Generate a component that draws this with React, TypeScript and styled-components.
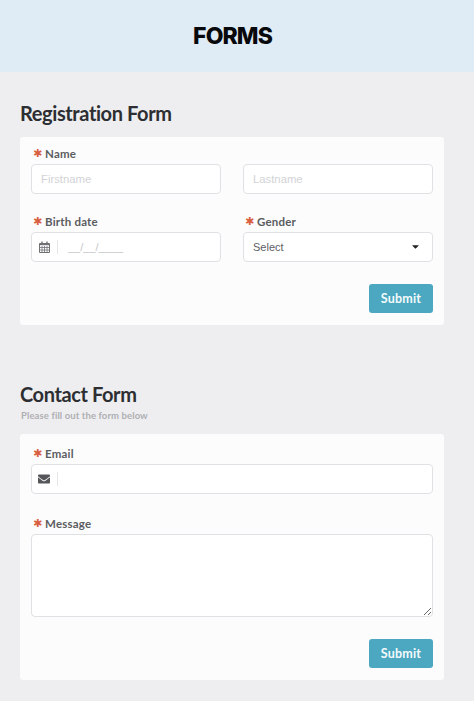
import styled, { createGlobalStyle } from "styled-components";
import { FaCaretDown, FaEnvelope } from "react-icons/fa";

const CalendarIcon = () => (
  <svg width="11" height="12" viewBox="0 0 11 12" fill="none" stroke="#707175" strokeWidth="1">
    <path d="M.5 2.500h10v9H.5z" />
    <path d="M.5 3.500h10" strokeWidth="1.4" />
    <path d="M3 5v6.500M5.500 5v6.500M8 5v6.500M.5 6.500h10M.5 9h10" strokeWidth="0.8" />
    <path d="M3 .5v2M8 .5v2" strokeWidth="1.4" />
  </svg>
);

const App = () => {
  return (
    <>
      <GlobalStyle />
      <Header>
        <Title>FORMS</Title>
      </Header>
      <Main>
        <Section>
          <SectionTitle>Registration Form</SectionTitle>
          <Card>
            <Grid>
              <Field>
                <Label>Name</Label>
                <TextInput placeholder="Firstname" />
              </Field>
              <Field>
                <LabelSpacer />
                <TextInput placeholder="Lastname" />
              </Field>
              <Field>
                <Label>Birth date</Label>
                <InputGroup>
                  <Addon>
                    <CalendarIcon />
                  </Addon>
                  <GroupInput placeholder="__/__/____" />
                </InputGroup>
              </Field>
              <Field>
                <Label>Gender</Label>
                <SelectBox>
                  Select
                  <FaCaretDown size={11} color="#222" />
                </SelectBox>
              </Field>
            </Grid>
            <Actions>
              <SubmitButton type="button">Submit</SubmitButton>
            </Actions>
          </Card>
        </Section>

        <Section $spaced>
          <SectionTitle>Contact Form</SectionTitle>
          <SectionHint>Please fill out the form below</SectionHint>
          <Card $roomy>
            <Stack>
              <Field>
                <Label>Email</Label>
                <InputGroup>
                  <Addon>
                    <FaEnvelope size={12} />
                  </Addon>
                  <GroupInput />
                </InputGroup>
              </Field>
              <Field>
                <Label>Message</Label>
                <MessageInput />
              </Field>
            </Stack>
            <Actions>
              <SubmitButton type="button">Submit</SubmitButton>
            </Actions>
          </Card>
        </Section>
      </Main>
    </>
  );
};

const GlobalStyle = createGlobalStyle`
  html, body {
    margin: 0;
    background: #eeeef0;
  }

  body {
    font-family: "Lato", "Liberation Sans", sans-serif;
    color: #2d2e32;
  }

  * {
    box-sizing: border-box;
  }
`;

const Header = styled.header`
  height: 72px;
  display: flex;
  align-items: center;
  justify-content: center;
  padding-right: 9px;
  background: #dfecf6;
`;

const Title = styled.h1`
  margin: 0;
  font-family: "Inter", sans-serif;
  font-size: 23px;
  font-weight: 800;
  letter-spacing: -0.9px;
  color: #08090c;
`;

const Main = styled.main`
  padding: 29px 30px 21px 20px;
`;

const Section = styled.section<{ $spaced?: boolean }>`
  margin-top: ${({ $spaced }) => ($spaced ? "57px" : "0")};
`;

const SectionTitle = styled.h2`
  margin: 0;
  font-size: 20px;
  line-height: 24px;
  font-weight: 700;
  letter-spacing: -0.4px;
  color: #2d2e32;
`;

const SectionHint = styled.p`
  margin: 4px 0 0 1px;
  font-size: 9.5px;
  line-height: 12px;
  font-weight: 700;
  letter-spacing: 0.1px;
  color: #aeafb3;
`;

const Card = styled.div<{ $roomy?: boolean }>`
  margin-top: 12px;
  padding: ${({ $roomy }) => ($roomy ? "11.5px" : "8.5px")} 11px 12px;
  border-radius: 3px;
  background: #fcfcfd;
`;

const Grid = styled.div`
  display: grid;
  grid-template-columns: 190px 190px;
  column-gap: 22px;
  row-gap: 20px;
`;

const Stack = styled.div`
  display: flex;
  flex-direction: column;
  gap: 22px;
`;

const Field = styled.div`
  display: flex;
  flex-direction: column;
  gap: 3px;
`;

const Label = styled.label`
  height: 15px;
  display: flex;
  align-items: center;
  padding-left: 2px;
  font-size: 11.5px;
  line-height: 15px;
  font-weight: 700;
  letter-spacing: 0.2px;
  color: #5b5c60;

  &::before {
    content: "✱";
    width: 12px;
    flex: none;
    font-family: "DejaVu Sans", sans-serif;
    font-size: 11px;
    line-height: 15px;
    color: #d9603f;
  }
`;

const LabelSpacer = styled.div`
  height: 15px;
`;

const TextInput = styled.input`
  width: 100%;
  height: 30px;
  padding: 0 9px;
  border: 1px solid #e0e1e4;
  border-radius: 4px;
  background: #fff;
  font-family: "Liberation Sans", sans-serif;
  font-size: 11.3px;
  outline: none;

  &::placeholder {
    color: #d2d3d6;
    opacity: 1;
  }
`;

const InputGroup = styled.div`
  height: 30px;
  display: flex;
  align-items: center;
  border: 1px solid #e0e1e4;
  border-radius: 4px;
  background: #fff;
`;

const Addon = styled.span`
  width: 26px;
  height: 14px;
  flex: none;
  display: flex;
  align-items: center;
  justify-content: center;
  padding-right: 1px;
  border-right: 1px solid #e6e6e8;
  color: #55565a;
`;

const GroupInput = styled.input`
  flex: 1;
  min-width: 0;
  height: 100%;
  padding: 0 10px;
  border: 0;
  background: transparent;
  font-family: "Liberation Sans", sans-serif;
  font-size: 11px;
  outline: none;

  &::placeholder {
    color: #c6c7ca;
    opacity: 1;
  }
`;

const SelectBox = styled.div`
  height: 30px;
  display: flex;
  align-items: center;
  justify-content: space-between;
  padding: 0 11px 0 9px;
  border: 1px solid #e0e1e4;
  border-radius: 4px;
  background: #fff;
  font-family: "Liberation Sans", sans-serif;
  font-size: 11px;
  color: #5f6064;
`;

const MessageInput = styled.textarea`
  display: block;
  width: 100%;
  height: 83px;
  padding: 6px 9px;
  border: 1px solid #e0e1e4;
  border-radius: 4px;
  background: #fff;
  outline: none;
  resize: vertical;
`;

const Actions = styled.div`
  display: flex;
  justify-content: flex-end;
  margin-top: 22.5px;
`;

const SubmitButton = styled.button`
  width: 64px;
  height: 29px;
  padding: 0;
  border: 0;
  border-radius: 3px;
  background: #4ba8c0;
  font-family: "Lato", sans-serif;
  font-size: 12.5px;
  font-weight: 700;
  letter-spacing: 0.2px;
  color: #f4fafc;
`;

export default App;
